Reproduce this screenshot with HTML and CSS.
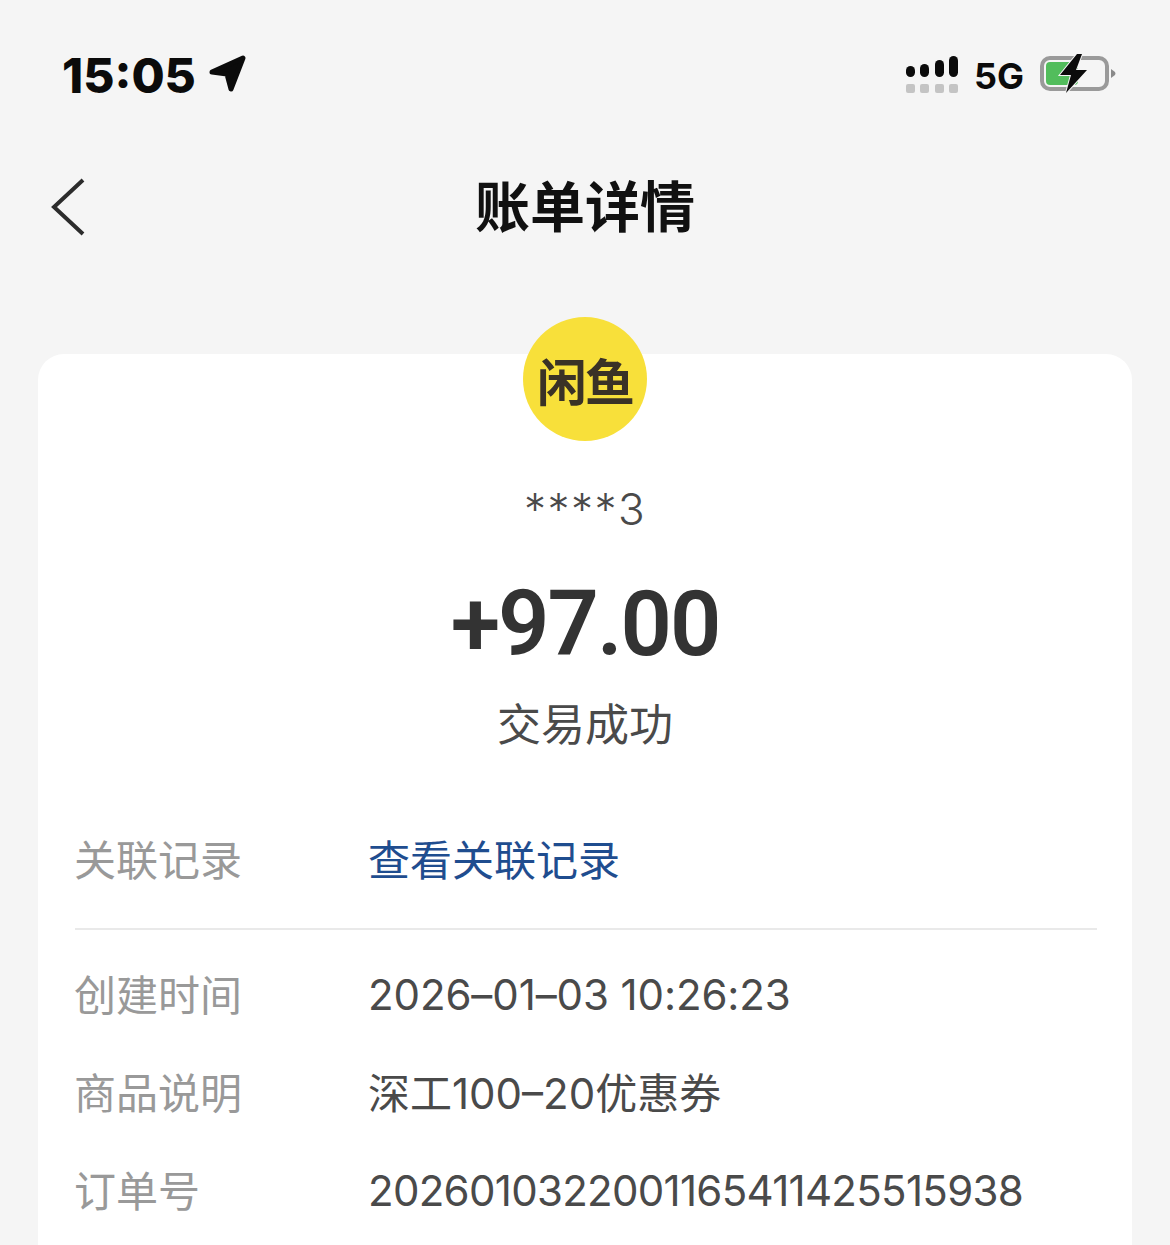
FILE: index.html
```html
<!DOCTYPE html>
<html lang="zh-CN">
<head>
  <meta charset="UTF-8" />
  <title>账单详情</title>
  <link rel="stylesheet" href="styles.css">
</head>
<body>
  <!-- Status bar -->
  <div class="status-bar">
    <div class="status-left">
      <span class="time">15:05</span>
      <svg class="location" width="40" height="40" viewBox="0 0 40 40">
        <path d="M4 18 L35 4 L23 35 L19 20 Z" fill="#0b0b0b" stroke="#0b0b0b" stroke-width="5" stroke-linejoin="round"/>
      </svg>
    </div>
    <div class="status-right">
      <svg class="signal" width="52" height="38" viewBox="0 0 52 38">
        <g fill="#0b0b0b">
          <rect x="0" y="11" width="9" height="11" rx="4.5"/>
          <rect x="14" y="9" width="9" height="13" rx="4.5"/>
          <rect x="29" y="5" width="9" height="17" rx="4.5"/>
          <rect x="43" y="1" width="9" height="21" rx="4.5"/>
        </g>
        <g fill="#c4c4c4">
          <rect x="0" y="29" width="9" height="9" rx="2"/>
          <rect x="14" y="29" width="9" height="9" rx="2"/>
          <rect x="29" y="29" width="9" height="9" rx="2"/>
          <rect x="43" y="29" width="9" height="9" rx="2"/>
        </g>
      </svg>
      <span class="network">5G</span>
      <svg class="battery" width="76" height="40" viewBox="0 0 76 40">
        <rect x="2" y="4" width="65" height="31" rx="8" fill="none" stroke="#9a9a9a" stroke-width="4"/>
        <rect x="6" y="8" width="32" height="23" rx="4" fill="#52bd5c"/>
        <path d="M71 15 L75 18 Q76 19.500 75 21 L71 24 Z" fill="#8a8a8a"/>
        <path d="M37 0 L20 21 L31 21 L26 39 L47 16 L36 16 L42 0 Z" fill="#0b0b0b" stroke="#f5f5f5" stroke-width="2" paint-order="stroke"/>
      </svg>
    </div>
  </div>

  <!-- Nav -->
  <div class="nav">
    <svg class="back" width="36" height="60" viewBox="0 0 36 60">
      <path d="M33 3 L4 30 L33 57" fill="none" stroke="#2c2c2c" stroke-width="4"/>
    </svg>
    <h1>账单详情</h1>
  </div>

  <!-- Card -->
  <div class="card">
    <div class="logo"><span>闲鱼</span></div>
    <div class="payer">****3</div>
    <div class="amount">+97.00</div>
    <div class="state">交易成功</div>

    <div class="row row-link">
      <span class="label">关联记录</span>
      <span class="value link">查看关联记录</span>
    </div>
    <div class="divider"></div>
    <div class="row">
      <span class="label">创建时间</span>
      <span class="value digits date">2026–01–03 10:26:23</span>
    </div>
    <div class="row">
      <span class="label">商品说明</span>
      <span class="value">深工100–20优惠券</span>
    </div>
    <div class="row">
      <span class="label">订单号</span>
      <span class="value digits">2026010322001165411425515938</span>
    </div>
  </div>
</body>
</html>
```

FILE: styles.css
```css
html, body {
  height: 1245px;
  overflow: hidden;
}

body {
  display: flex;
  flex-direction: column;
  margin: 0;
  background-color: #f5f5f5;
  font-family: "Noto Sans CJK SC", "Noto Sans", sans-serif;
  color: #4a4a4a;
}

/* Status bar */
.status-bar {
  display: flex;
  flex-shrink: 0;
  justify-content: space-between;
  align-items: center;
  height: 148px;
  padding: 0 54px 0 62px;
}

.status-left,
.status-right {
  display: flex;
  align-items: center;
}

.time {
  margin-top: 2px;
  font-family: "Inter", sans-serif;
  font-weight: 800;
  font-size: 48px;
  color: #0b0b0b;
}

.location {
  margin-left: 12px;
}

.network {
  margin: 3px 16px 0;
  font-family: "Inter", sans-serif;
  font-weight: 700;
  font-size: 36px;
  color: #0b0b0b;
}

/* Nav */
.nav {
  position: relative;
  flex-shrink: 0;
  height: 116px;
  text-align: center;
}

.nav h1 {
  margin: 0;
  font-size: 55px;
  font-weight: 700;
  line-height: 110px;
  color: #111;
}

.back {
  position: absolute;
  left: 50px;
  top: 29px;
}

/* Card */
.card {
  flex: 1;
  margin: 90px 38px 0;
  padding: 0 36px;
  background-color: #fff;
  border-radius: 26px 26px 0 0;
}

.logo {
  display: flex;
  justify-content: center;
  align-items: center;
  width: 124px;
  height: 124px;
  margin: 0 auto;
  position: relative;
  top: -37px;
  border-radius: 50%;
  background-color: #f8e03a;
  font-size: 50px;
  font-weight: 700;
  line-height: 118px;
  color: #3a3226;
  letter-spacing: -2px;
}

.payer {
  margin-top: 1px;
  text-align: center;
  font-family: "Inter", sans-serif;
  font-size: 44px;
  font-weight: 300;
  letter-spacing: 1.5px;
  line-height: 60px;
}

.amount {
  margin-top: 31px;
  text-align: center;
  font-family: "Roboto", sans-serif;
  font-weight: 600;
  font-size: 90px;
  letter-spacing: -2px;
  line-height: 110px;
  color: #333;
}

.state {
  margin-top: 12px;
  text-align: center;
  font-size: 44px;
  line-height: 60px;
}

.row {
  display: flex;
  align-items: center;
  height: 98px;
  font-family: "Inter", "Noto Sans CJK SC", sans-serif;
  font-size: 42px;
}

.row-link {
  margin-top: 55px;
  height: 100px;
}

.label {
  width: 294px;
  flex-shrink: 0;
  color: #999;
}

.value {
  white-space: nowrap;
}

/* digit-only lines sit a little lower than the CJK ones */
.digits {
  margin-top: 5px;
  letter-spacing: -0.7px;
}

.date {
  letter-spacing: -0.1px;
}

.link {
  color: #1f4d8f;
}

.divider {
  height: 2px;
  margin: 21px -1px 13px 1px;
  background-color: #e9e9e9;
}
```
